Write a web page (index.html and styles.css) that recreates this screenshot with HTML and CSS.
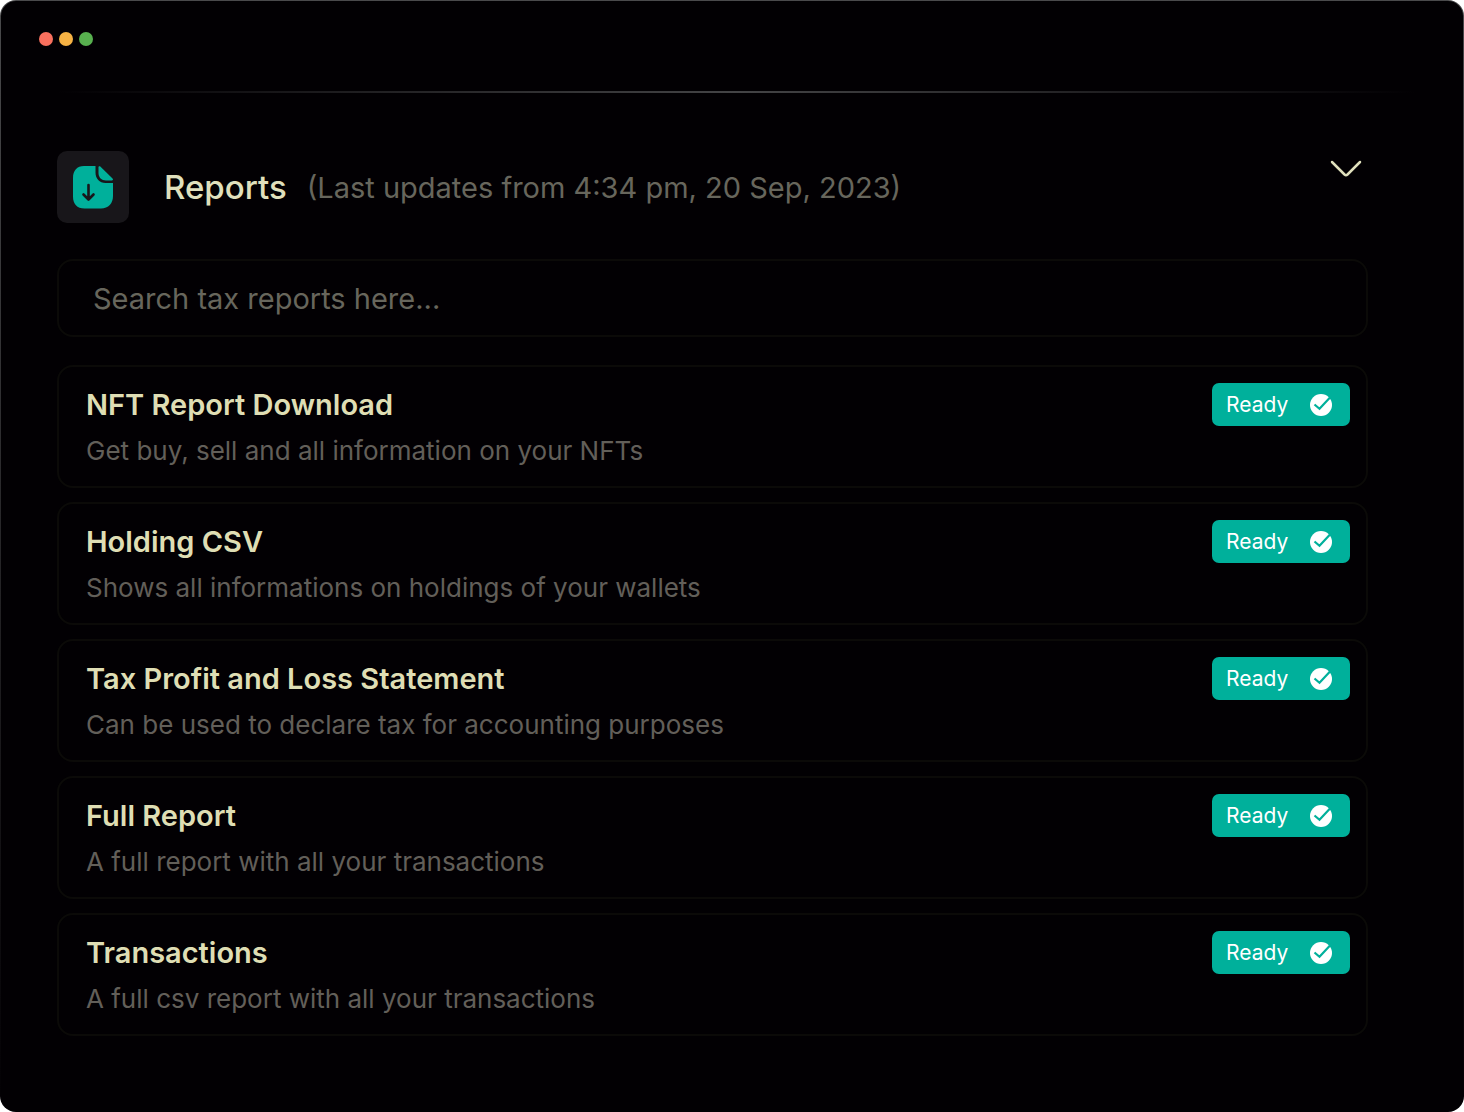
FILE: index.html
```html
<!DOCTYPE html>
<html lang="en">
<head>
  <meta charset="UTF-8">
  <meta name="viewport" content="width=device-width, initial-scale=1.0">
  <title>Tax Reports</title>
  <link rel="stylesheet" href="styles.css">
</head>
<body>
  <svg class="sprite" aria-hidden="true">
    <symbol id="icon-check" viewBox="0 0 22 22">
      <circle cx="11" cy="11" r="11" fill="#fff"/>
      <path d="M4.500 10.500l5 4.300L20 3.500" fill="none" stroke="#00b09b" stroke-width="2.200"/>
    </symbol>
  </svg>

  <div class="window">
    <div class="window-bar">
      <span class="dot dot-red"></span>
      <span class="dot dot-yellow"></span>
      <span class="dot dot-green"></span>
    </div>
    <hr class="divider">

    <main class="reports">
      <header class="reports-header">
        <div class="reports-icon">
          <svg width="42" height="44" viewBox="0 0 42 44">
            <path fill="#00b09b" d="M12 1h11.500v6.500c0 6 4 10.500 10 10.500H41v13c0 7.500-4.500 12.500-12 12.500H12.500C5 43.500 1 39 1 31.500V13C1 5.500 5 1 12 1z"/>
            <path fill="#00b09b" d="M26.500 2.200c0-1 1-1.400 1.800-.7L40.500 13.500c.9.900.5 2-.7 2H34c-4.500 0-7.500-3-7.500-7.500z"/>
            <path d="M16.500 20v14M11.500 29.500l5 5 5-5" fill="none" stroke="#18161a" stroke-width="2.600" stroke-linecap="round" stroke-linejoin="round"/>
          </svg>
        </div>
        <h1>Reports</h1>
        <p class="updated">(Last updates from 4:34 pm, 20 Sep, 2023)</p>
        <button class="toggle" type="button" aria-label="Collapse reports">
          <svg width="34" height="20" viewBox="0 0 34 20">
            <path d="M3 3l12.500 12.500q1.500 1.300 3 0L31 3" fill="none" stroke="#e0e0bd" stroke-width="2.500" stroke-linecap="round"/>
          </svg>
        </button>
      </header>

      <input class="search" type="text" placeholder="Search tax reports here..." aria-label="Search tax reports">

      <ul class="report-list">
        <li class="report">
          <div>
            <h2>NFT Report Download</h2>
            <p>Get buy, sell and all information on your NFTs</p>
          </div>
          <button class="ready" type="button">Ready <svg><use href="#icon-check"/></svg></button>
        </li>
        <li class="report">
          <div>
            <h2>Holding CSV</h2>
            <p>Shows all informations on holdings of your wallets</p>
          </div>
          <button class="ready" type="button">Ready <svg><use href="#icon-check"/></svg></button>
        </li>
        <li class="report">
          <div>
            <h2>Tax Profit and Loss Statement</h2>
            <p>Can be used to declare tax for accounting purposes</p>
          </div>
          <button class="ready" type="button">Ready <svg><use href="#icon-check"/></svg></button>
        </li>
        <li class="report">
          <div>
            <h2>Full Report</h2>
            <p>A full report with all your transactions</p>
          </div>
          <button class="ready" type="button">Ready <svg><use href="#icon-check"/></svg></button>
        </li>
        <li class="report">
          <div>
            <h2>Transactions</h2>
            <p>A full csv report with all your transactions</p>
          </div>
          <button class="ready" type="button">Ready <svg><use href="#icon-check"/></svg></button>
        </li>
      </ul>
    </main>
  </div>
</body>
</html>
```
FILE: styles.css
```css
* {
  box-sizing: border-box;
}

body {
  margin: 0;
  background-color: #fff;
  font-family: Inter, "Open Sans", sans-serif;
}

h1, h2, p, ul {
  margin: 0;
  padding: 0;
}

button, input {
  font-family: inherit;
}

.sprite {
  display: none;
}

/* 1px border that fades out towards the bottom */
.window {
  min-height: 100vh;
  padding-bottom: 74px;
  border: 1px solid transparent;
  border-radius: 16px;
  background:
    linear-gradient(#020003, #020003) padding-box,
    linear-gradient(#4a4a4c, #020003) border-box;
}

.window-bar {
  display: flex;
  gap: 6px;
  padding: 31px 38px 0;
}

.dot {
  width: 14px;
  height: 14px;
  border-radius: 50%;
}

.dot-red {
  background-color: #f9705e;
}

.dot-yellow {
  background-color: #f6b244;
}

.dot-green {
  background-color: #58b04f;
}

.divider {
  height: 2px;
  margin: 45px 48px 0 56px;
  border: 0;
  background: linear-gradient(90deg, transparent, #444446, transparent);
}

.reports {
  padding: 58px 95px 0 56px;
}

.reports-header {
  display: flex;
  align-items: center;
  margin-bottom: 36px;
}

.reports-icon {
  display: flex;
  align-items: center;
  justify-content: center;
  width: 72px;
  height: 72px;
  border-radius: 10px;
  background-color: #18161a;
}

.reports-header h1 {
  margin: 0 20px 0 35px;
  color: #e0e0bd;
  font-size: 33px;
  font-weight: 500;
}

.updated {
  color: #67665c;
  font-size: 29px;
}

.toggle {
  display: flex;
  align-self: flex-start;
  margin: 8px 5px 0 auto;
  padding: 0;
  border: 0;
  background: none;
  cursor: pointer;
}

.search {
  display: block;
  width: 100%;
  height: 78px;
  padding: 0 34px;
  border: 2px solid #0b0a08;
  border-radius: 16px;
  background: none;
  color: #e0e0bd;
  font-size: 29px;
}

.search::placeholder {
  color: #67665c;
  opacity: 1;
}

.report-list {
  display: flex;
  flex-direction: column;
  gap: 14px;
  margin-top: 28px;
  list-style: none;
}

.report {
  display: flex;
  align-items: flex-start;
  justify-content: space-between;
  min-height: 123px;
  padding: 16px 16px 0 27px;
  border: 2px solid #0b0a08;
  border-radius: 16px;
}

.report h2 {
  color: #dfdeb4;
  font-size: 29px;
  font-weight: 600;
  line-height: 44px;
}

.report p {
  margin-top: 4px;
  color: #625f59;
  font-size: 26px;
  line-height: 40px;
}

.ready {
  display: flex;
  align-items: center;
  justify-content: space-between;
  width: 138px;
  height: 43px;
  padding: 0 18px 0 14px;
  border: 0;
  border-radius: 7px;
  background-color: #00b09b;
  color: #fff;
  font-size: 21px;
  cursor: pointer;
}

.ready svg {
  width: 22px;
  height: 22px;
}
```
